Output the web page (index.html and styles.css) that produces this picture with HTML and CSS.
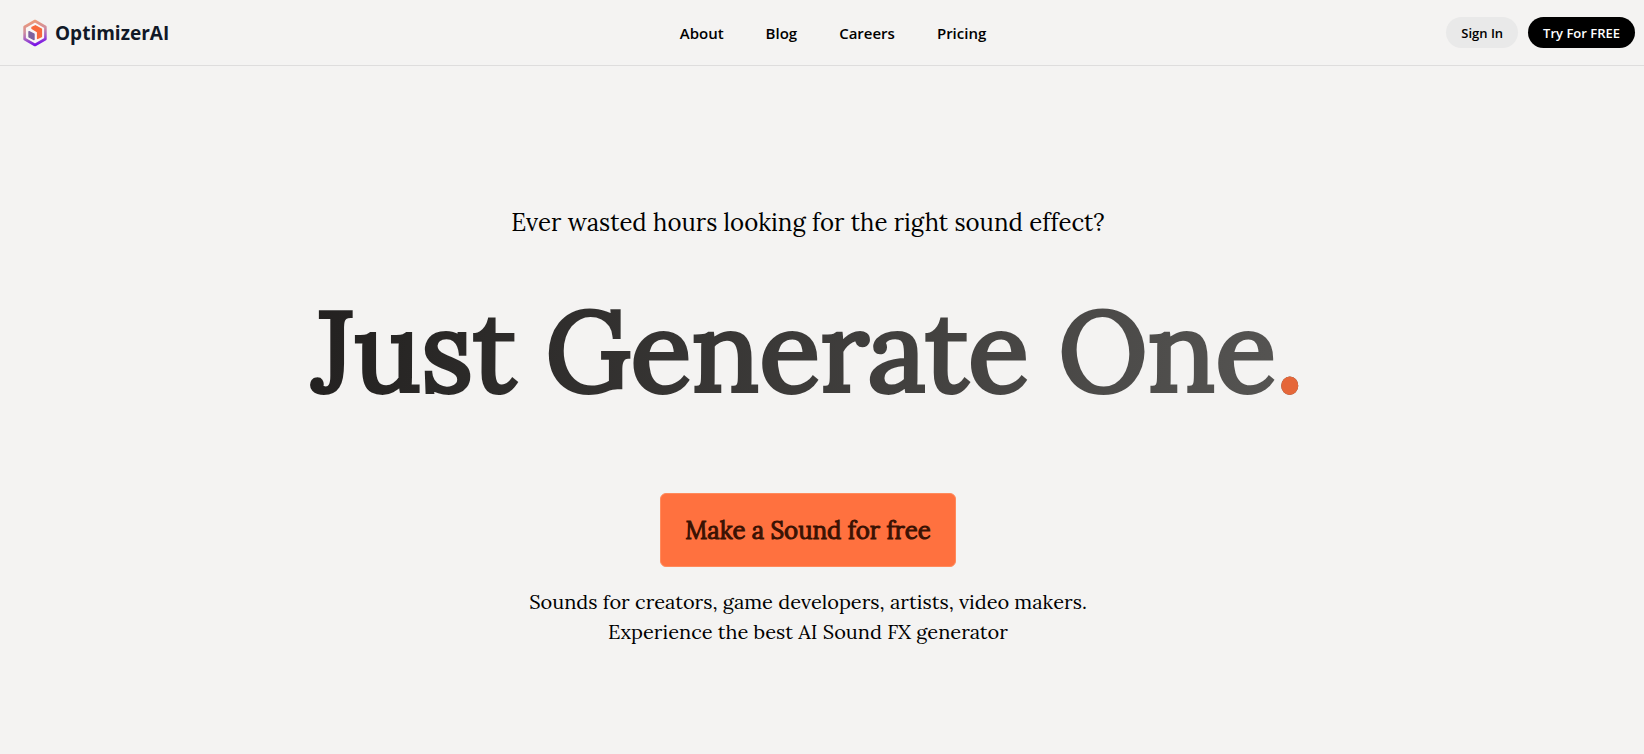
FILE: index.html
```html
<!DOCTYPE html>
<html lang="en">
<head>
    <meta charset="UTF-8">
    <meta name="viewport" content="width=device-width, initial-scale=1.0">
    <title>OptimizerAI</title>
    <link rel="stylesheet" href="styles.css">
</head>
<body>
    <header class="header">
        <a href="#" class="logo">
            <svg width="24" height="28" viewBox="0 0 24 28" aria-hidden="true">
                <defs>
                    <linearGradient id="ring" x1="0.3" y1="0" x2="0.5" y2="1">
                        <stop offset="0" stop-color="#ee9a78"/>
                        <stop offset="0.4" stop-color="#cf8d9e"/>
                        <stop offset="0.7" stop-color="#a45fc4"/>
                        <stop offset="1" stop-color="#7a10e8"/>
                    </linearGradient>
                </defs>
                <path d="M12 2 L22.4 8 V20 L12 26 L1.6 20 V8 Z" fill="#faf6f6" stroke="url(#ring)" stroke-width="2.6" stroke-linejoin="round"/>
                <path d="M9 8.4 L12.4 6.8 L18.4 10.2 V17.6 L14.6 19.4 V12.8 L9 9.4 Z" fill="#f8693c" stroke="#f8693c" stroke-width="1.4" stroke-linejoin="round"/>
                <path d="M6 12.6 L11 15.2 V20.6 L6 18 Z" fill="#7d629f" stroke="#7d629f" stroke-width="1.4" stroke-linejoin="round"/>
            </svg>
            <span>OptimizerAI</span>
        </a>
        <nav class="nav">
            <a href="#">About</a>
            <a href="#">Blog</a>
            <a href="#">Careers</a>
            <a href="#">Pricing</a>
        </nav>
        <div class="actions">
            <button class="btn">Sign In</button>
            <button class="btn dark">Try For FREE</button>
        </div>
    </header>

    <main class="hero">
        <p class="tagline">Ever wasted hours looking for the right sound effect?</p>
        <h1>Just Generate One<span class="dot">.</span></h1>
        <button class="cta">Make a Sound for free</button>
        <p class="description">
            Sounds for creators, game developers, artists, video makers.<br>
            Experience the best AI Sound FX generator
        </p>
    </main>
</body>
</html>
```
FILE: styles.css
```css
* {
    box-sizing: border-box;
}
body {
    margin: 0;
    background: #f4f3f2;
    color: #000;
    font-family: "Open Sans", "Noto Sans", sans-serif;
}
.header {
    display: grid;
    grid-template-columns: 1fr auto 1fr;
    align-items: center;
    height: 66px;
    padding: 0 9px 0 23px;
    border-bottom: 1px solid #dedddd;
}
.logo {
    display: flex;
    align-items: center;
    gap: 8px;
    color: #111827;
    font-size: 19px;
    font-weight: 700;
    text-decoration: none;
}
.nav {
    display: flex;
    gap: 42px;
    padding-left: 8px;
}
.nav a {
    color: #000;
    font-size: 15px;
    font-weight: 600;
    text-decoration: none;
}
.actions {
    display: flex;
    justify-content: flex-end;
    gap: 10px;
}
.btn {
    height: 31px;
    padding: 0 15px;
    border: none;
    border-radius: 16px;
    background: #e9e9e9;
    color: #000;
    font-family: inherit;
    font-size: 13px;
    font-weight: 600;
    cursor: pointer;
}
.btn.dark {
    background: #000;
    color: #fff;
}
.hero {
    display: flex;
    flex-direction: column;
    align-items: center;
    padding: 139px 28px 40px 0;
    font-family: Lora, "Liberation Serif", serif;
    text-align: center;
}
.tagline {
    margin: 0;
    font-size: 24px;
    line-height: 36px;
}
h1 {
    margin: 33px 0 67px;
    padding: 0 8px;
    background: linear-gradient(100deg, #22201f, #575654);
    -webkit-background-clip: text;
    background-clip: text;
    color: transparent;
    font-size: 112px;
    font-weight: 400;
    line-height: 152px;
    -webkit-text-stroke: 4px transparent;
}
.dot {
    color: #e5673a;
    -webkit-text-stroke: 4px #e5673a;
}
.cta {
    height: 74px;
    padding: 0 24px;
    border: 1px solid #ff8a5c;
    border-radius: 6px;
    background: #ff713f;
    color: #3a1203;
    font-family: inherit;
    font-size: 24px;
    -webkit-text-stroke: 1px #3a1203;
    cursor: pointer;
}
.description {
    margin: 20px 0 0;
    font-size: 20px;
    line-height: 30px;
}
```
